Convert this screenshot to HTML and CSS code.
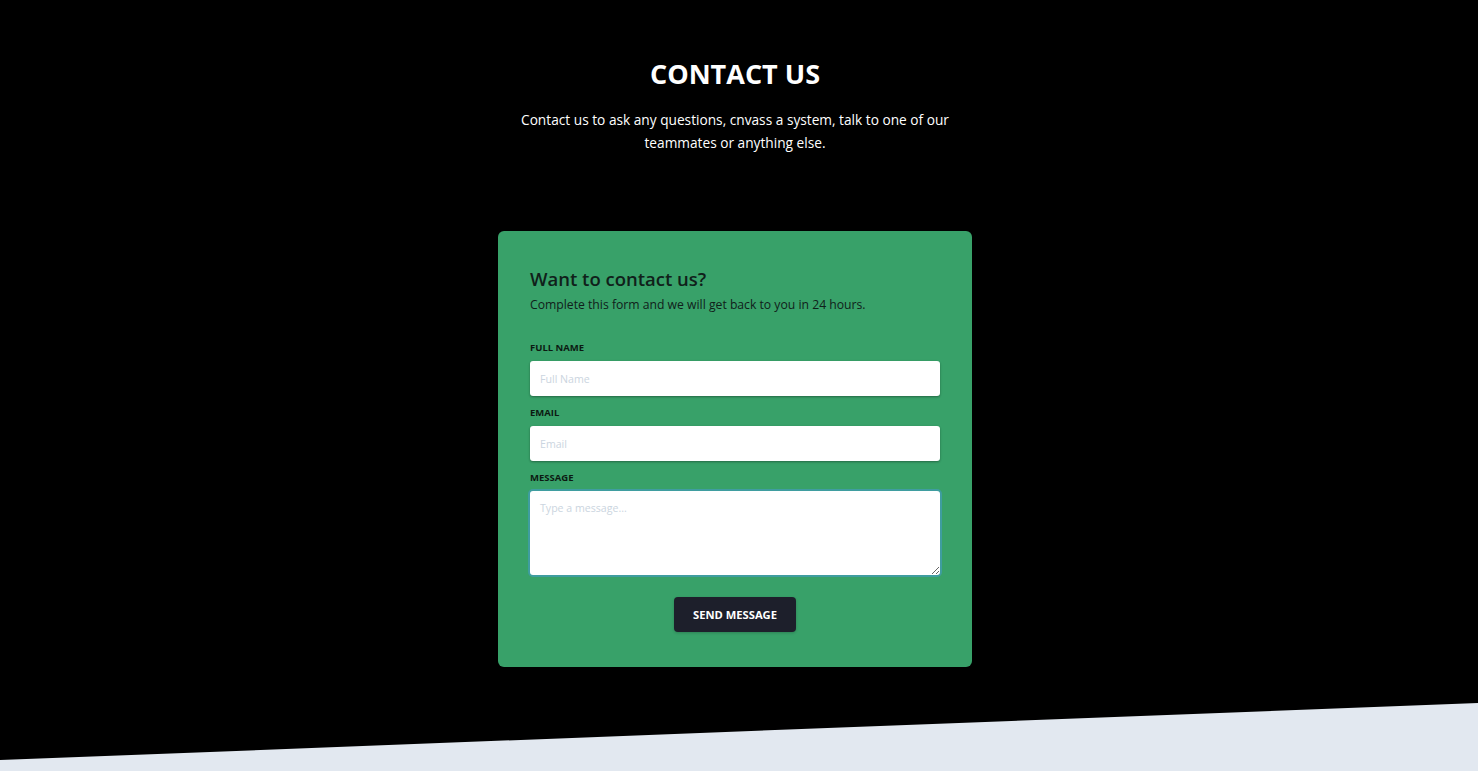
FILE: index.html
```html
<!DOCTYPE html>
<html lang="en">
<head>
<meta charset="utf-8">
<title>Contact Us</title>
<link rel="stylesheet" href="styles.css">
</head>
<body>
<main class="page">
  <section class="intro">
    <h1 class="intro-title">CONTACT US</h1>
    <p class="intro-text">Contact us to ask any questions, cnvass a system, talk to one of our teammates or anything else.</p>
  </section>
  <section class="form-section">
    <form class="card">
      <h2 class="card-title">Want to contact us?</h2>
      <p class="card-sub">Complete this form and we will get back to you in 24 hours.</p>
      <div class="field first">
        <label class="label" for="full-name">FULL NAME</label>
        <input class="input" id="full-name" type="text" placeholder="Full Name">
      </div>
      <div class="field">
        <label class="label" for="email">EMAIL</label>
        <input class="input" id="email" type="email" placeholder="Email">
      </div>
      <div class="field">
        <label class="label" for="message">MESSAGE</label>
        <textarea class="input textarea ring" id="message" rows="4" placeholder="Type a message..." autofocus></textarea>
      </div>
      <div class="actions">
        <button class="btn" type="button">SEND MESSAGE</button>
      </div>
    </form>
  </section>
  <div class="slope"></div>
</main>
</body>
</html>
```
FILE: styles.css
```css
* { box-sizing: border-box; }
html, body { margin: 0; padding: 0; background: #000; }
body {
  font-family: "Open Sans", "Noto Sans", sans-serif;
  color: #fff;
  height: 771px;
  overflow: hidden;
}
.page {
  display: flex;
  flex-direction: column;
  align-items: center;
  padding-right: 8px;
  min-height: 771px;
}
.intro {
  display: flex;
  flex-direction: column;
  align-items: center;
  padding-top: 56px;
  text-align: center;
}
.intro-title {
  margin: 0;
  font-size: 27px;
  line-height: 36px;
  font-weight: 700;
  color: #fff;
}
.intro-text {
  margin: 16px 0 0;
  max-width: 450px;
  font-size: 13.7px;
  line-height: 23px;
  color: #fff;
}
.form-section {
  margin-top: 77px;
  display: flex;
  justify-content: center;
}
.card {
  width: 474px;
  background: #38a169;
  border-radius: 6px;
  padding: 32px 32px 35px;
  display: flex;
  flex-direction: column;
}
.card-title {
  margin: 0;
  font-size: 18.5px;
  line-height: 31px;
  font-weight: 600;
  color: #10201a;
}
.card-sub {
  margin: 0;
  font-size: 12.2px;
  line-height: 22px;
  color: #10201a;
}
.field {
  display: flex;
  flex-direction: column;
  margin-top: 9px;
}
.field.first { margin-top: 24px; }
.label {
  font-size: 9.5px;
  line-height: 16px;
  font-weight: 700;
  color: #0c1a12;
  margin-bottom: 5px;
}
.input {
  width: 100%;
  height: 35px;
  border: 0;
  border-radius: 3px;
  background: #fff;
  padding: 0 10px;
  font-family: inherit;
  font-size: 10.6px;
  color: #4a5568;
  box-shadow: 0 1px 3px rgba(0,0,0,0.12), 0 1px 2px rgba(0,0,0,0.24);
  outline: none;
}
.input::placeholder { color: #cbd5e0; }
.textarea {
  height: 84px;
  padding: 10px 10px;
  resize: vertical;
  display: block;
}
.ring, .textarea:focus {
  box-shadow: 0 0 0 2px #3f9da0;
}
.actions {
  display: flex;
  justify-content: center;
  margin-top: 22px;
}
.btn {
  width: 122px;
  height: 35px;
  border: 0;
  border-radius: 4px;
  background: #1d1f2b;
  color: #fff;
  font-family: inherit;
  font-size: 11.2px;
  font-weight: 700;
  cursor: pointer;
  box-shadow: 0 1px 3px rgba(0,0,0,0.2);
}
.slope {
  margin-top: auto;
  align-self: stretch;
  margin-right: -8px;
  height: 68px;
  background: #e2e8f0;
  clip-path: polygon(100% 0, 100% 100%, 0 100%, 0 57px);
}
```
